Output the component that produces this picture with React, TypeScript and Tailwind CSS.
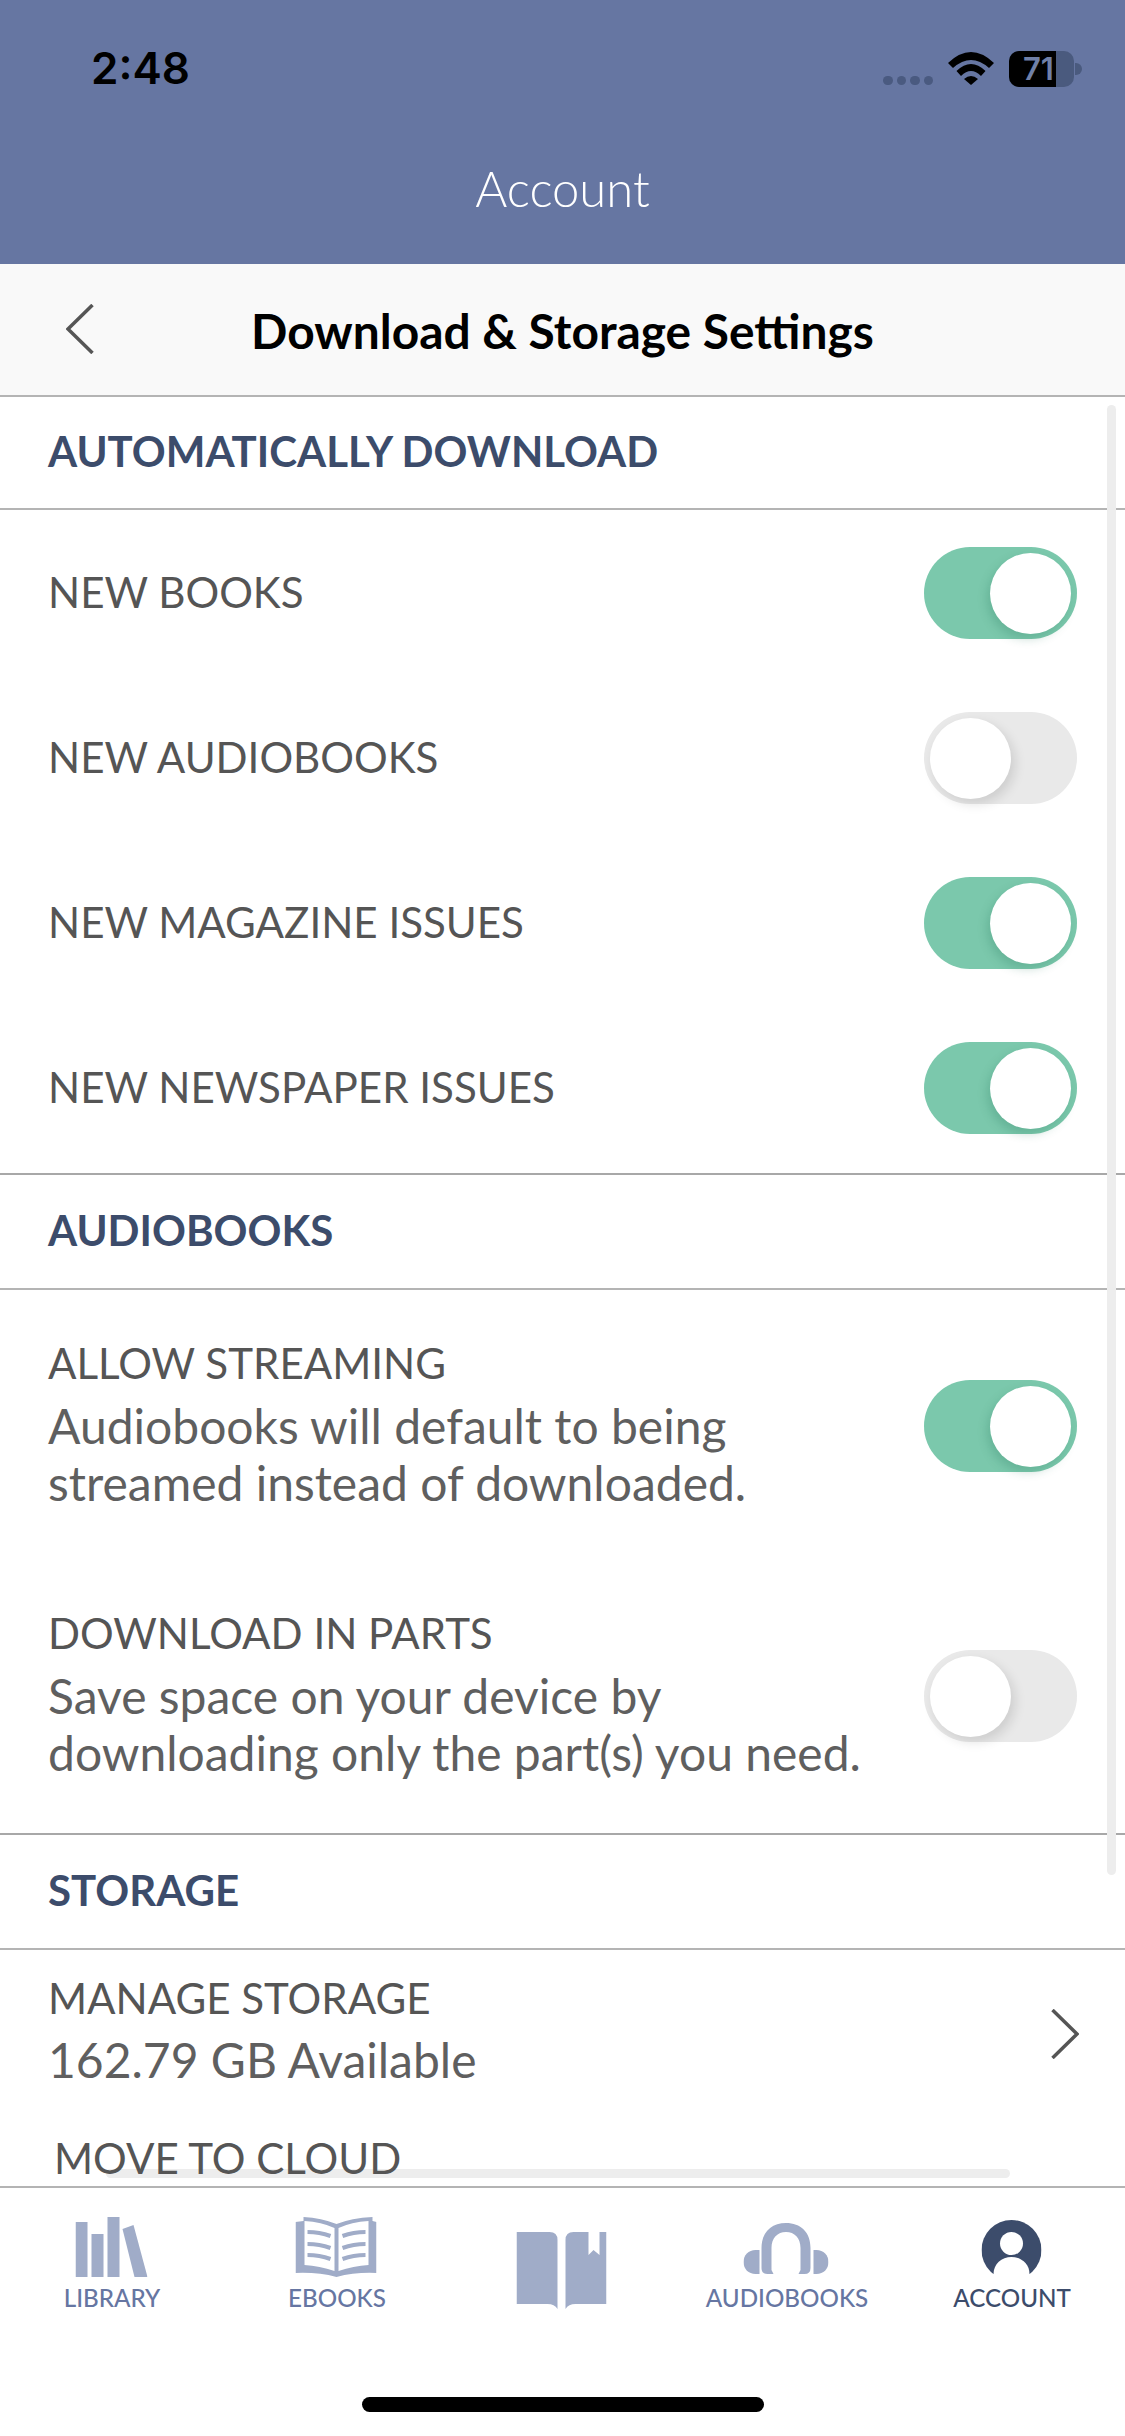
import type { ReactNode } from 'react';

const iconColor = '#a0acc8';

function Toggle({ on }: { on: boolean }) {
  return (
    <div
      className={`relative h-[92px] w-[153px] shrink-0 rounded-full ${on ? 'bg-[#7bc8ac]' : 'bg-[#e9e9e9]'}`}
    >
      <div
        className={`absolute top-[6px] h-[81px] w-[81px] rounded-full bg-white ${
          on ? 'right-[6px] shadow-[-3px_5px_10px_rgba(40,120,90,0.25)]' : 'left-[6px] shadow-[4px_5px_12px_rgba(0,0,0,0.12)]'
        }`}
      />
    </div>
  );
}

function SectionTitle({ title, height }: { title: string; height: string }) {
  return (
    <div className={`flex items-center border-b-2 border-[#b4b4b4] pb-[3px] pl-[48px] ${height}`}>
      <span className="text-[42px] font-bold leading-none text-[#3c4c6b]">{title}</span>
    </div>
  );
}

function ToggleRow({ label, on }: { label: string; on: boolean }) {
  return (
    <div className="flex h-[165px] items-center justify-between px-[48px]">
      <span className="text-[42.1px] leading-none text-[#555555]">{label}</span>
      <Toggle on={on} />
    </div>
  );
}

function DetailRow({ label, lines, on }: { label: string; lines: string[]; on: boolean }) {
  return (
    <div className="flex h-[270px] items-center justify-between px-[48px]">
      <div className="-mt-[13px] flex flex-col">
        <span className="text-[42.1px] leading-[68px] text-[#555555]">{label}</span>
        {lines.map((line) => (
          <span key={line} className="text-[48px] leading-[57px] text-[#5f5f5f]">
            {line}
          </span>
        ))}
      </div>
      <Toggle on={on} />
    </div>
  );
}

function LibraryIcon() {
  return (
    <svg width="72" height="60" viewBox="0 0 72 60" fill={iconColor}>
      <rect x="0" y="5" width="12" height="55" />
      <rect x="16" y="17" width="12" height="43" />
      <rect x="32" y="0" width="12" height="60" />
      <path d="M47 12 L58 8 L72 60 L59 60 Z" />
    </svg>
  );
}

function EbooksIcon() {
  return (
    <svg width="81" height="60" viewBox="0 0 81 60">
      <path d="M0 5 L8 4 L8 0 Q26 1 41 7 Q56 1 77 0 L77 4 L81 5 L81 56 Q60 55 41 60 Q22 55 0 56 Z" fill={iconColor} />
      <path d="M9 4 Q26 5 39 11 L39 54 Q24 49 9 48 Z" fill="white" />
      <path d="M43 11 Q56 5 73 4 L73 48 Q58 49 43 54 Z" fill="white" />
      <g stroke={iconColor} strokeWidth="4" fill="none">
        <path d="M12 15 Q24 15 35 19" />
        <path d="M12 27 Q24 27 35 31" />
        <path d="M12 38 Q24 38 35 42" />
        <path d="M47 19 Q58 15 70 15" />
        <path d="M47 31 Q58 27 70 27" />
        <path d="M47 42 Q58 38 70 38" />
      </g>
    </svg>
  );
}

function BookIcon() {
  return (
    <svg width="90" height="77" viewBox="0 0 90 77" fill={iconColor}>
      <path d="M0 0 L33 0 Q41 0 41 8 L41 77 Q38 72 31 72 L0 72 Z" />
      <path d="M57 0 Q49 0 49 8 L49 77 Q52 72 59 72 L90 72 L90 0 L83 0 L83 23 L77 18 L72 23 L72 0 Z" />
    </svg>
  );
}

function AudiobooksIcon() {
  return (
    <svg width="85" height="51" viewBox="0 0 85 51" fill={iconColor}>
      <path d="M18 45 L18 25 C18 9 28 0 42.5 0 C57 0 67 9 67 25 L67 45 Q67 51 61 51 L55 51 L57 47 L57 25 C57 15 51 9 42.5 9 C34 9 28 15 28 25 L28 47 L30 51 L24 51 Q18 51 18 45 Z" />
      <path d="M16 27 L16 51 L12 51 C5 51 0 46 0 39 C0 32 5 27 12 27 Z" />
      <path d="M70 27 L70 51 L73 51 C80 51 85 46 85 39 C85 32 80 27 73 27 Z" />
    </svg>
  );
}

function AccountIcon() {
  return (
    <svg width="60" height="54" viewBox="0 0 60 54" className="overflow-hidden">
      <circle cx="30" cy="30" r="30" fill="#3c4c6b" />
      <ellipse cx="30" cy="23.5" rx="11.5" ry="11.5" fill="white" />
      <path d="M12 54 C12 44 20 37 30 37 C40 37 48 44 48 54 Z" fill="white" />
    </svg>
  );
}

function Tab({
  icon,
  label,
  active,
  className,
  labelGap = 'mt-[12px]',
}: {
  icon: ReactNode;
  label?: string;
  active?: boolean;
  className: string;
  labelGap?: string;
}) {
  return (
    <div className={`flex flex-col items-center ${className}`}>
      <div className="-translate-x-[1.5px]">{icon}</div>
      {label && (
        <span
          className={`${labelGap} -translate-x-[0.5px] text-[24.2px] font-medium leading-[24px] ${active ? 'text-[#3c4c6b]' : 'text-[#6676a2]'}`}
        >
          {label}
        </span>
      )}
    </div>
  );
}

export default function App() {
  return (
    <div className="relative flex h-[2436px] w-[1125px] flex-col overflow-hidden bg-white font-['Lato',sans-serif]">
      {/* status + account header */}
      <div className="h-[264px] shrink-0 bg-[#6676a2]">
        <div className="flex h-[160px] items-start justify-between pl-[91px] pr-[43px] pt-[44px]">
          <span className="font-['Inter',sans-serif] text-[44px] font-semibold leading-[48px] text-black">2:48</span>
          <div className="flex items-start pt-[7px]">
            <div className="mt-[25px] flex gap-[4px]">
              {[0, 1, 2, 3].map((dot) => (
                <div key={dot} className="h-[9px] w-[9.5px] rounded-full bg-[#4a5a80]" />
              ))}
            </div>
            <svg width="46" height="33" viewBox="0 0 46 33" className="ml-[15px] mt-[1px]" fill="black">
              <path d="M0 11 Q23 -11 46 11 L41 16 Q23 0 5 16 Z" />
              <path d="M8.5 19 Q23 5 37.5 19 L33 24 Q23 14 13 24 Z" />
              <path d="M16 27 Q23 21 30 27 L23 33 Z" />
            </svg>
            <div className="relative ml-[15px] h-[36px] w-[65px] overflow-hidden rounded-[10px] bg-[#4a5a7e]">
              <div className="absolute inset-y-0 left-0 w-[47px] bg-black" />
              <span className="absolute left-[14px] top-0 font-['Inter',sans-serif] text-[31px] font-semibold leading-[36px] text-[#7080a8]">
                71
              </span>
            </div>
            <div className="ml-[1px] mt-[12px] h-[12px] w-[7px] rounded-r-full bg-[#4a5a7e]" />
          </div>
        </div>
        <div className="text-center text-[49px] font-light leading-[56px] text-white">Account</div>
      </div>

      {/* page title */}
      <div className="relative flex h-[133px] shrink-0 items-center justify-center border-b-2 border-[#b4b4b4] bg-[#f9f9f9] pt-[2px]">
        <svg width="28" height="50" viewBox="0 0 28 50" className="absolute left-[66px] top-[40px]" fill="none" stroke="#555555" strokeWidth="3.5">
          <path d="M26.5 1 L2 25 L26.5 49" />
        </svg>
        <span className="text-[47.9px] font-bold leading-none text-black">Download &amp; Storage Settings</span>
      </div>

      {/* settings list */}
      <div className="relative min-h-0 flex-1 overflow-hidden">
        <SectionTitle title="AUTOMATICALLY DOWNLOAD" height="h-[113px]" />
        <ToggleRow label="NEW BOOKS" on />
        <ToggleRow label="NEW AUDIOBOOKS" on={false} />
        <ToggleRow label="NEW MAGAZINE ISSUES" on />
        <div className="pb-[3px]">
          <ToggleRow label="NEW NEWSPAPER ISSUES" on />
        </div>
        <div className="border-t-2 border-[#a8a8a8]" />
        <SectionTitle title="AUDIOBOOKS" height="h-[115px]" />
        <div className="pb-[2px] pt-[1px]">
          <DetailRow label="ALLOW STREAMING" lines={['Audiobooks will default to being', 'streamed instead of downloaded.']} on />
          <DetailRow label="DOWNLOAD IN PARTS" lines={['Save space on your device by', 'downloading only the part(s) you need.']} on={false} />
        </div>
        <div className="border-t-2 border-[#a8a8a8]" />
        <SectionTitle title="STORAGE" height="h-[115px]" />
        <div className="flex h-[168px] items-center justify-between pl-[48px] pr-[46px]">
          <div className="-mt-[10px] flex flex-col">
            <span className="text-[42.1px] leading-[62px] text-[#555555]">MANAGE STORAGE</span>
            <span className="text-[48px] leading-[62px] text-[#5f5f5f]">162.79 GB Available</span>
          </div>
          <svg width="28" height="50" viewBox="0 0 28 50" fill="none" stroke="#555555" strokeWidth="3.5">
            <path d="M1.5 1 L26 25 L1.5 49" />
          </svg>
        </div>

        {/* scrollbars */}
        <div className="absolute right-[9px] top-[8px] h-[1470px] w-[9px] rounded-full bg-[#ededed]" />
        <div className="absolute bottom-[8px] left-[106px] h-[9px] w-[904px] rounded-full bg-[#ededed]" />

        <div className="relative mt-[12px] pl-[54px] text-[42.1px] leading-[56px] text-[#555555]">MOVE TO CLOUD</div>
      </div>

      {/* tab bar */}
      <div className="grid h-[250px] shrink-0 grid-cols-5 border-t-2 border-[#b4b4b4] bg-white">
        <Tab className="pt-[29px]" icon={<LibraryIcon />} label="LIBRARY" labelGap="mt-[9px]" />
        <Tab className="pt-[29px]" icon={<EbooksIcon />} label="EBOOKS" labelGap="mt-[9px]" />
        <Tab className="pt-[44px]" icon={<BookIcon />} />
        <Tab className="pt-[35px]" icon={<AudiobooksIcon />} label="AUDIOBOOKS" />
        <Tab className="pt-[32px]" icon={<AccountIcon />} label="ACCOUNT" active />
      </div>

      {/* home indicator */}
      <div className="absolute bottom-[24px] left-[362px] h-[15px] w-[402px] rounded-full bg-black" />
    </div>
  );
}
